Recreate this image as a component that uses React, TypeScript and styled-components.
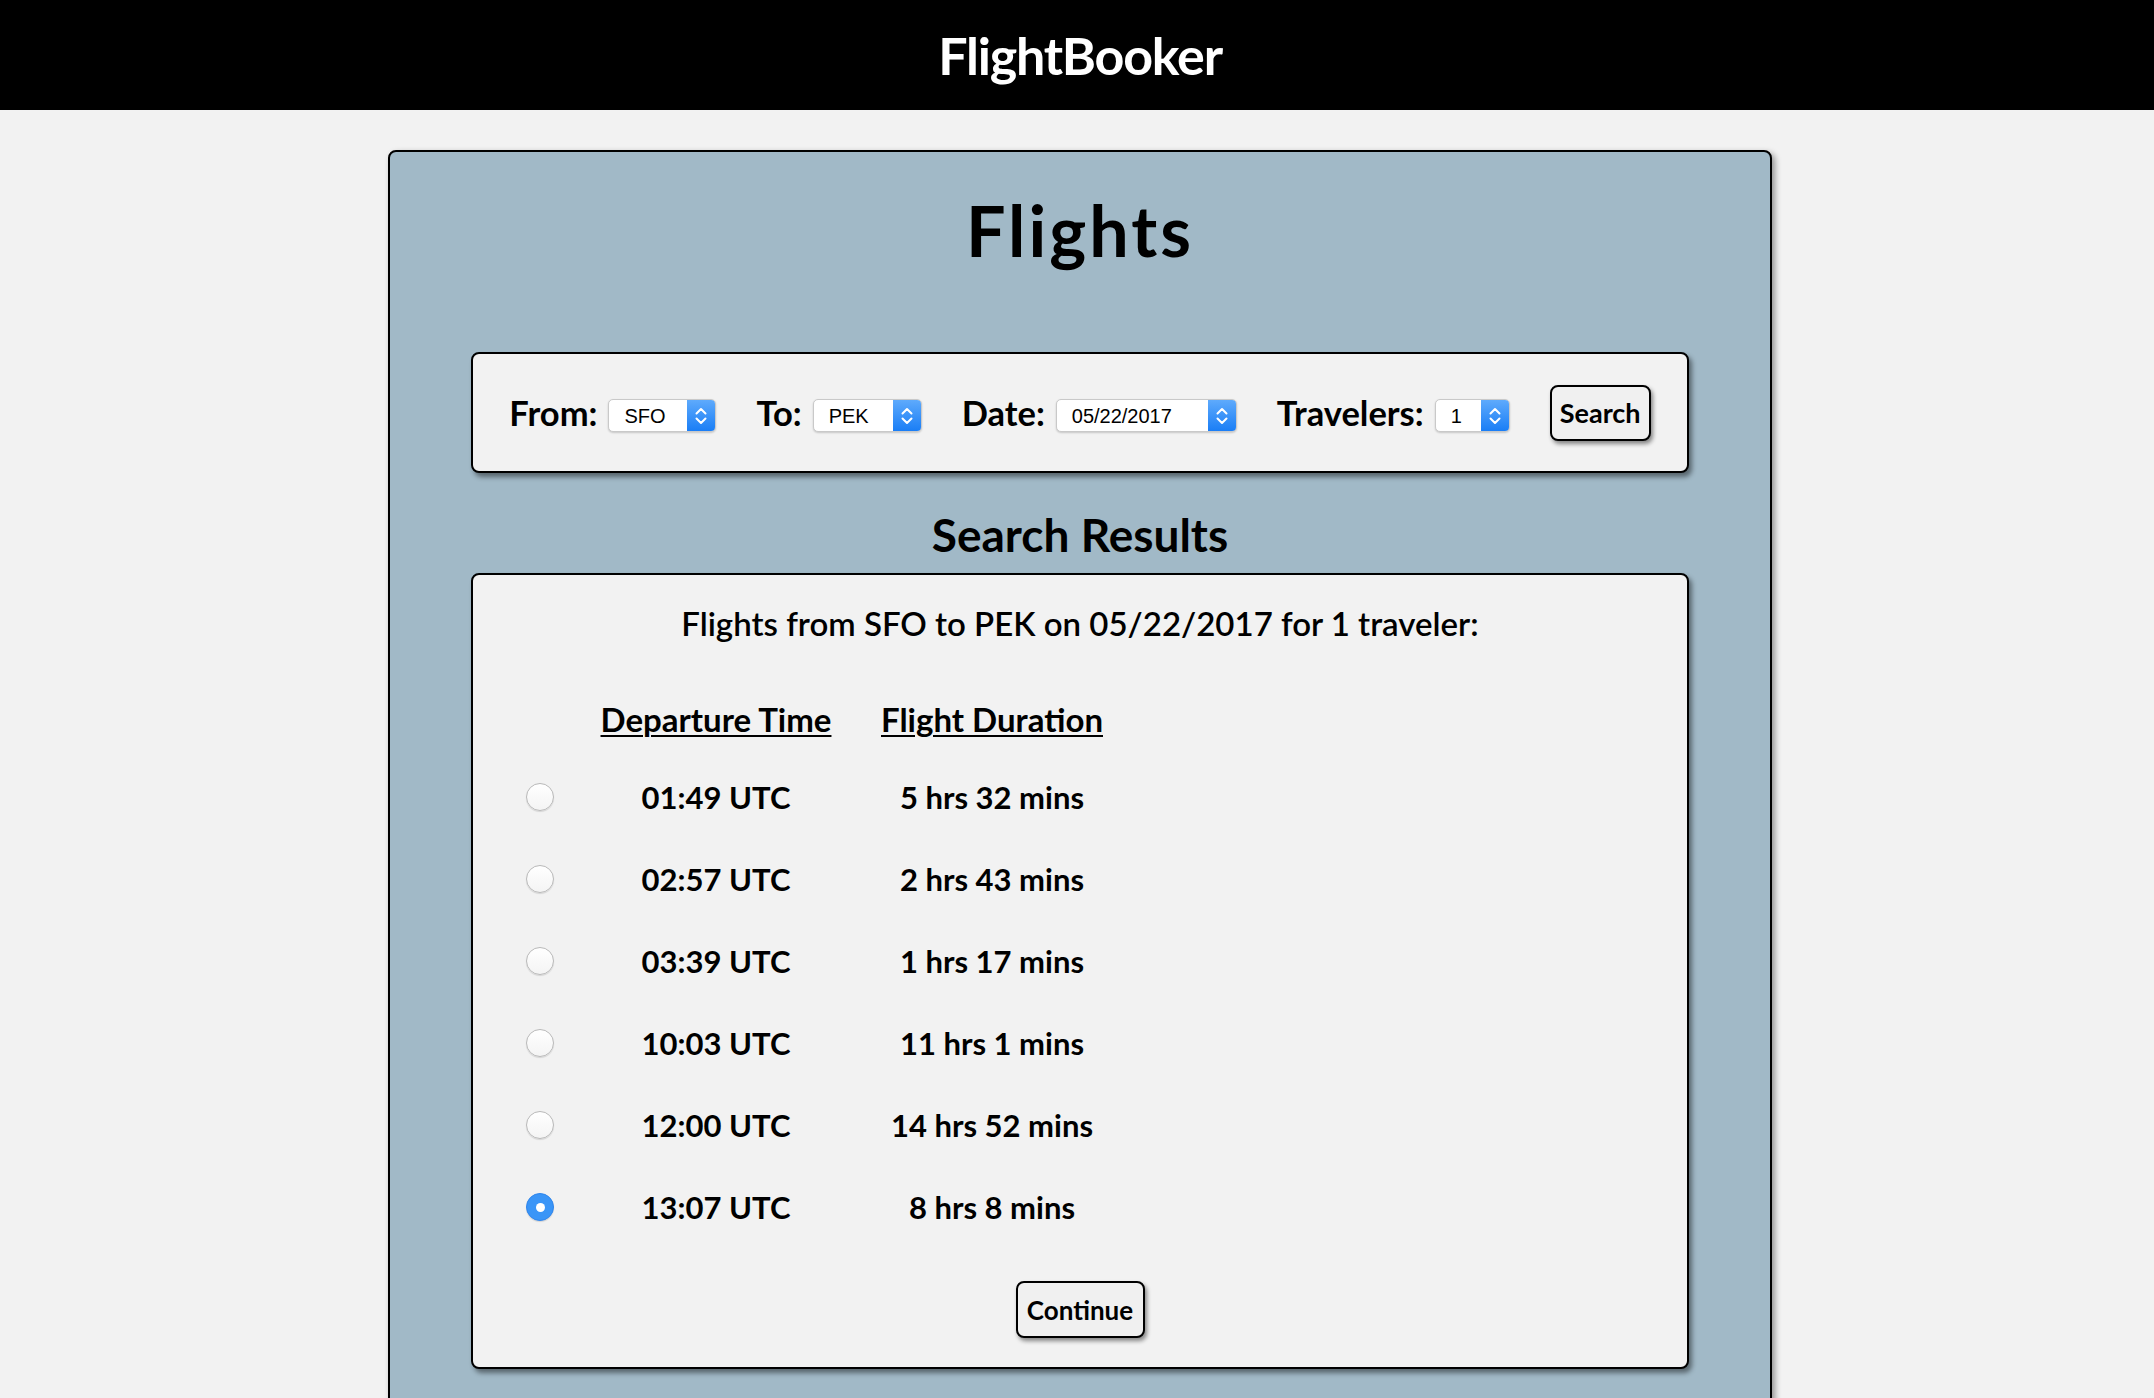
import React from "react";
import styled, { createGlobalStyle } from "styled-components";

const GlobalStyle = createGlobalStyle`
  html, body { margin: 0; padding: 0; background: #f2f2f2; }
  body { font-family: Lato, "Open Sans", sans-serif; color: #000; }
  * { box-sizing: border-box; }
`;

const TopBar = styled.header`
  height: 110px;
  background: #000;
  display: flex;
  align-items: center;
  justify-content: center;
  padding-left: 6px;
`;

const Brand = styled.div`
  color: #fff;
  font-size: 52px;
  font-weight: 700;
  line-height: 1;
  letter-spacing: -1.2px;
`;

const Shell = styled.div`
  padding: 40px 0 0 6px;
`;

const Panel = styled.main`
  width: 1384px;
  margin: 0 auto;
  background: #a1b9c7;
  border: 2px solid #000;
  border-radius: 8px;
  box-shadow: 3px 3px 6px rgba(0, 0, 0, 0.4);
  padding: 38px 81px 60px;
  display: flex;
  flex-direction: column;
`;

const PageTitle = styled.h1`
  margin: 0;
  text-align: center;
  font-size: 70px;
  line-height: 80px;
  font-weight: 700;
  letter-spacing: 3px;
`;

const Card = styled.section`
  background: #f2f2f2;
  border: 2px solid #000;
  border-radius: 8px;
  box-shadow: 3px 4px 5px rgba(0, 0, 0, 0.45);
`;

const SearchCard = styled(Card)`
  margin-top: 82px;
  height: 121px;
  display: flex;
  align-items: center;
  justify-content: center;
  gap: 40px;
`;

const Field = styled.div`
  display: flex;
  align-items: center;
  gap: 11px;
  font-size: 34.5px;
  font-weight: 700;
  line-height: 40px;
`;

const SelectBox = styled.div<{ $w: number }>`
  width: ${(p) => p.$w}px;
  height: 33px;
  margin-top: 6px;
  display: flex;
  align-items: stretch;
  background: #fff;
  border: 1px solid #c9c9c9;
  border-radius: 5px;
  box-shadow: 0 1px 2px rgba(0, 0, 0, 0.18);
  overflow: hidden;
`;

const SelectValue = styled.span`
  flex: 1;
  padding-left: 15px;
  display: flex;
  align-items: center;
  font-family: "Liberation Sans", Arial, sans-serif;
  font-weight: 400;
  font-size: 20px;
  line-height: 1;
  color: #000;
`;

const Stepper = styled.span`
  width: 28px;
  display: flex;
  align-items: center;
  justify-content: center;
  background: linear-gradient(#5eaafc, #1a7ef6);
`;

const SearchButton = styled.button`
  width: 101px;
  height: 56px;
  border: 2px solid #000;
  border-radius: 8px;
  background: #f0f0f0;
  box-shadow: 2px 3px 4px rgba(0, 0, 0, 0.45);
  font-family: Lato, sans-serif;
  font-size: 27px;
  font-weight: 700;
  color: #000;
  padding: 0;
  cursor: pointer;
`;

const SectionTitle = styled.h2`
  margin: 34px 0 0;
  text-align: center;
  font-size: 46px;
  line-height: 56px;
  font-weight: 700;
`;

const ResultsCard = styled(Card)`
  margin-top: 10px;
  padding: 28px 0 29px;
  display: flex;
  flex-direction: column;
`;

const Summary = styled.p`
  margin: 0;
  text-align: center;
  font-size: 33px;
  line-height: 40px;
  font-weight: 600;
`;

const FlightGrid = styled.div`
  margin: 56px 0 0 29px;
  display: grid;
  grid-template-columns: 76px 276px 276px;
  grid-template-rows: 57px;
  grid-auto-rows: 82px;
  align-items: center;
  justify-items: center;
`;

const HeadCell = styled.div`
  align-self: start;
  height: 40px;
  font-size: 33px;
  line-height: 40px;
  font-weight: 700;
  text-decoration: underline;
  text-decoration-thickness: 2px;
  text-underline-offset: 3px;
`;

const Row = styled.div`
  display: contents;
`;

const Cell = styled.div`
  font-size: 31px;
  font-weight: 700;
  line-height: 82px;
`;

const Radio = styled.span<{ $on: boolean }>`
  width: 28px;
  height: 28px;
  border-radius: 50%;
  display: flex;
  align-items: center;
  justify-content: center;
  background: ${(p) => (p.$on ? "#3a95f7" : "linear-gradient(#ffffff, #f4f4f4)")};
  border: 1px solid ${(p) => (p.$on ? "#2f86ee" : "#b9b9b9")};
  box-shadow: 0 1px 1px rgba(0, 0, 0, 0.12);
  &::after {
    content: "";
    display: ${(p) => (p.$on ? "block" : "none")};
    width: 9px;
    height: 9px;
    border-radius: 50%;
    background: #fff;
  }
`;

const ContinueRow = styled.div`
  margin-top: 33px;
  display: flex;
  justify-content: center;
`;

const ContinueButton = styled(SearchButton)`
  width: 129px;
  height: 57px;
  font-size: 26px;
`;

const Chevrons = () => (
  <svg width="14" height="22" viewBox="0 0 14 22" fill="none" stroke="#fff" strokeWidth="2" strokeLinecap="round" strokeLinejoin="round">
    <path d="M2.5 8.5 L7 4 L11.5 8.5" />
    <path d="M2.5 13.5 L7 18 L11.5 13.5" />
  </svg>
);

const Select = ({ value, width }: { value: string; width: number }) => (
  <SelectBox $w={width}>
    <SelectValue>{value}</SelectValue>
    <Stepper>
      <Chevrons />
    </Stepper>
  </SelectBox>
);

const flights = [
  { time: "01:49 UTC", dur: "5 hrs 32 mins" },
  { time: "02:57 UTC", dur: "2 hrs 43 mins" },
  { time: "03:39 UTC", dur: "1 hrs 17 mins" },
  { time: "10:03 UTC", dur: "11 hrs 1 mins" },
  { time: "12:00 UTC", dur: "14 hrs 52 mins" },
  { time: "13:07 UTC", dur: "8 hrs 8 mins" },
];

export default function App() {
  return (
    <>
      <GlobalStyle />
      <TopBar>
        <Brand>FlightBooker</Brand>
      </TopBar>
      <Shell>
        <Panel>
          <PageTitle>Flights</PageTitle>
          <SearchCard>
            <Field>
              From: <Select value="SFO" width={108} />
            </Field>
            <Field>
              To: <Select value="PEK" width={109} />
            </Field>
            <Field>
              Date: <Select value="05/22/2017" width={181} />
            </Field>
            <Field>
              Travelers: <Select value="1" width={75} />
            </Field>
            <SearchButton>Search</SearchButton>
          </SearchCard>
          <SectionTitle>Search Results</SectionTitle>
          <ResultsCard>
            <Summary>Flights from SFO to PEK on 05/22/2017 for 1 traveler:</Summary>
            <FlightGrid>
              <Row>
                <span />
                <HeadCell>Departure Time</HeadCell>
                <HeadCell>Flight Duration</HeadCell>
              </Row>
              {flights.map((f, i) => (
                <Row key={f.time}>
                  <Radio $on={i === flights.length - 1} />
                  <Cell>{f.time}</Cell>
                  <Cell>{f.dur}</Cell>
                </Row>
              ))}
            </FlightGrid>
            <ContinueRow>
              <ContinueButton>Continue</ContinueButton>
            </ContinueRow>
          </ResultsCard>
        </Panel>
      </Shell>
    </>
  );
}
